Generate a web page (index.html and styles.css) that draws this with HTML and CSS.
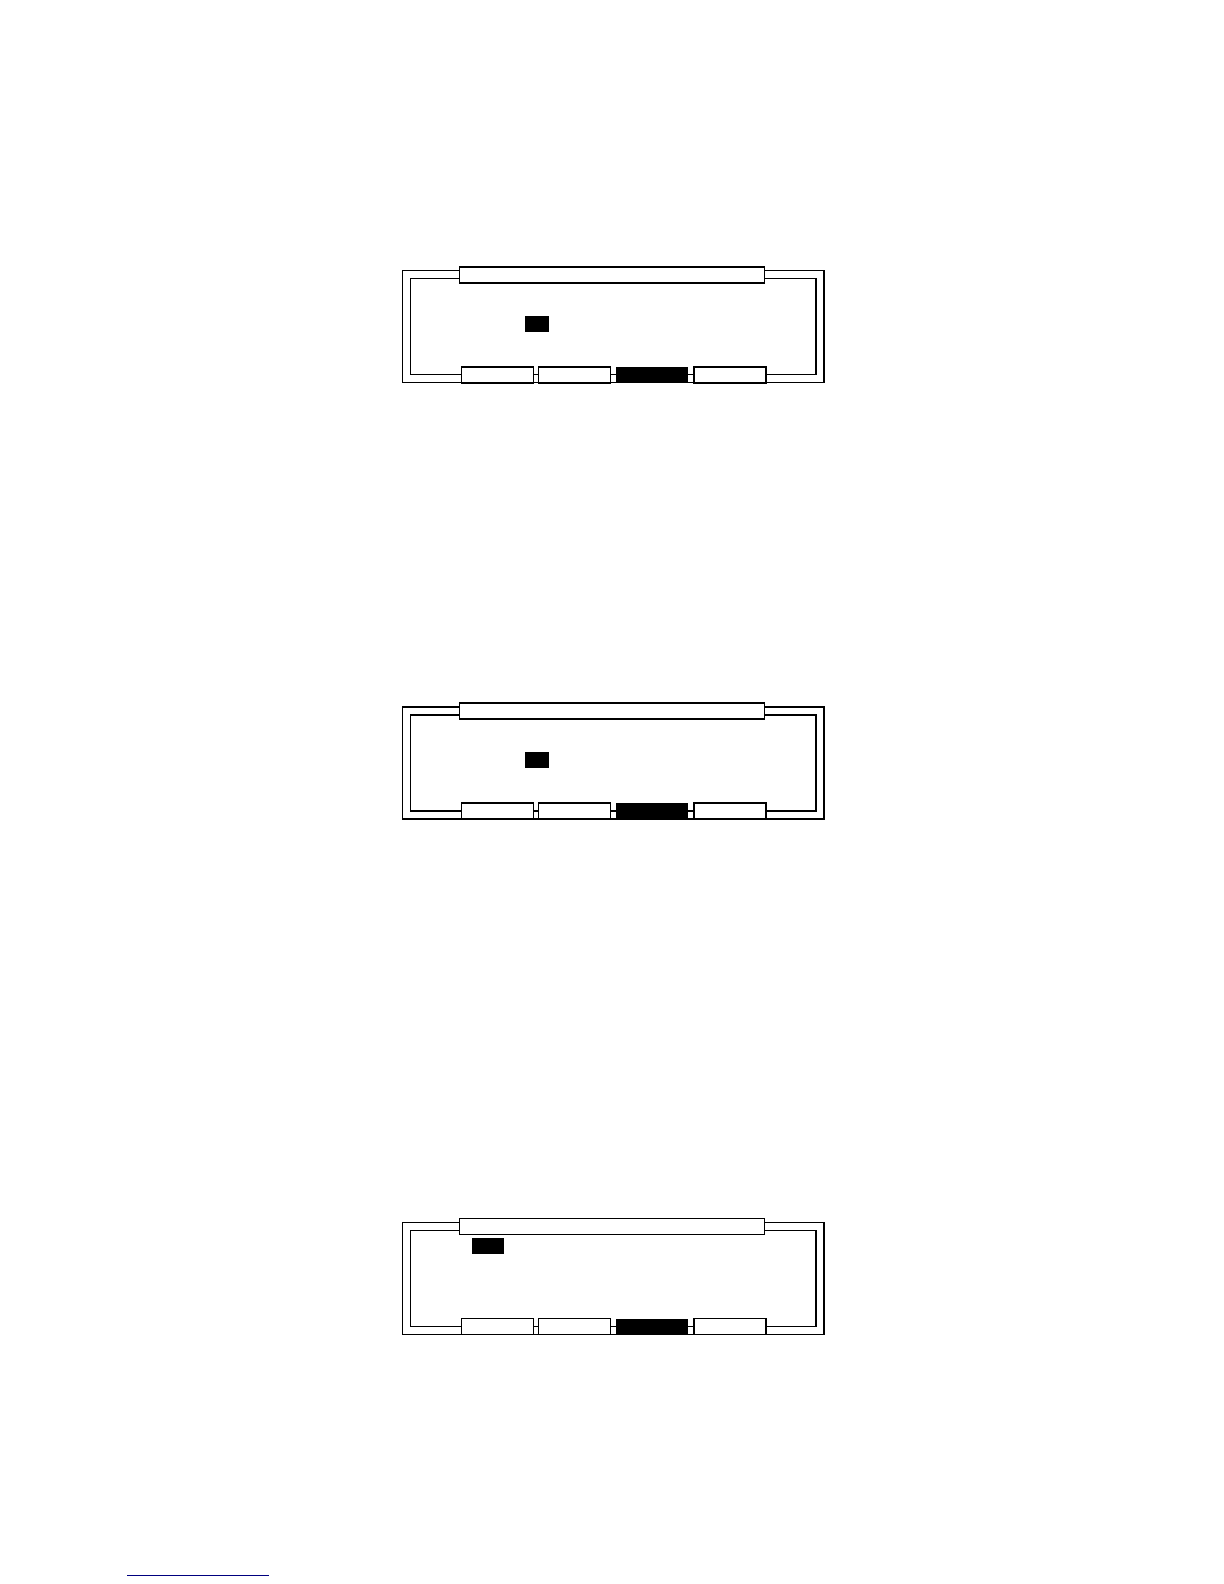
FILE: index.html
```html
<!DOCTYPE html>
<html lang="en">
<head>
<meta charset="utf-8">
<meta name="viewport" content="width=device-width, initial-scale=1">
<title>Display panels</title>
<link rel="stylesheet" href="styles.css">
</head>
<body>
<main class="page">
  <section class="panel">
    <div class="frame"><div class="frame-inner"></div></div>
    <div class="content">
      <div class="title"></div>
      <div class="cursor"></div>
      <div class="keys">
        <button class="key" type="button" aria-label="Key 1"></button>
        <button class="key" type="button" aria-label="Key 2"></button>
        <button class="key key-active" type="button" aria-label="Key 3"></button>
        <button class="key key-last" type="button" aria-label="Key 4"></button>
      </div>
    </div>
  </section>
  <section class="panel panel-bold">
    <div class="frame"><div class="frame-inner"></div></div>
    <div class="content">
      <div class="title"></div>
      <div class="cursor"></div>
      <div class="keys">
        <button class="key" type="button" aria-label="Key 1"></button>
        <button class="key" type="button" aria-label="Key 2"></button>
        <button class="key key-active" type="button" aria-label="Key 3"></button>
        <button class="key key-last" type="button" aria-label="Key 4"></button>
      </div>
    </div>
  </section>
  <section class="panel panel-thin">
    <div class="frame"><div class="frame-inner"></div></div>
    <div class="content">
      <div class="title"></div>
      <div class="cursor cursor-wide"></div>
      <div class="keys">
        <button class="key" type="button" aria-label="Key 1"></button>
        <button class="key" type="button" aria-label="Key 2"></button>
        <button class="key key-active" type="button" aria-label="Key 3"></button>
        <button class="key key-last" type="button" aria-label="Key 4"></button>
      </div>
    </div>
  </section>
</main>
<footer class="footer"><a class="footer-link" href="#" aria-label="Back to top"></a></footer>
</body>
</html>
```
FILE: styles.css
```css
* {
  box-sizing: border-box;
}

body {
  margin: 0;
  background: #fff;
  font-family: "Liberation Sans", sans-serif;
}

.page {
  display: flex;
  flex-direction: column;
  align-items: center;
  padding: 266px 0 240px 3px;
}

/* The frame and the content share one grid cell, content on top. */
.panel {
  --line: 1px;
  --box-line: 2px;
  --box-height: 18px;
  display: grid;
  grid-template: 118px / 423px;
}

.panel-bold {
  --line: 2px;
  margin-top: 318px;
}

.panel-thin {
  --box-line: 1px;
  --box-height: 17px;
  grid-template-rows: 117px;
  margin-top: 398px;
}

.frame,
.content {
  grid-area: 1 / 1;
}

.frame {
  display: grid;
  margin: 4px 0 1px;
  padding: calc(8px - var(--line)) 6px calc(8px - var(--line)) 7px;
  border: solid #000;
  border-width: var(--line) 2px var(--line) 1px;
}

.panel-bold .frame,
.panel-thin .frame {
  margin-bottom: 0;
}

.frame-inner {
  border: solid #000;
  border-width: var(--line) 2px var(--line) 1px;
}

.content {
  display: flex;
  flex-direction: column;
  align-items: flex-start;
}

.title {
  width: 306px;
  height: var(--box-height);
  margin-left: 57px;
  border: solid #000;
  border-width: var(--box-line) 1px;
  background: #fff;
}

.cursor {
  width: 24px;
  height: 16px;
  margin: 32px 0 0 123px;
  background: #000;
}

.cursor-wide {
  width: 32px;
  margin: 3px 0 0 70px;
}

.keys {
  display: flex;
  gap: 4px;
  margin: auto 0 0 59px;
}

.key {
  width: 73px;
  height: var(--box-height);
  padding: 0;
  border: solid #000;
  border-width: var(--box-line) 1px;
  border-radius: 0;
  background: #fff;
}

.key-active {
  width: 72px;
  height: 16px;
  margin: 1px 1px 0;
  background: #000;
}

.key-last {
  width: 74px;
  border-width: var(--box-line) 2px;
}

.footer {
  padding: 0 127px 8px;
}

.footer-link {
  display: block;
  width: 142px;
  border-bottom: 1px solid #00007f;
}
```
